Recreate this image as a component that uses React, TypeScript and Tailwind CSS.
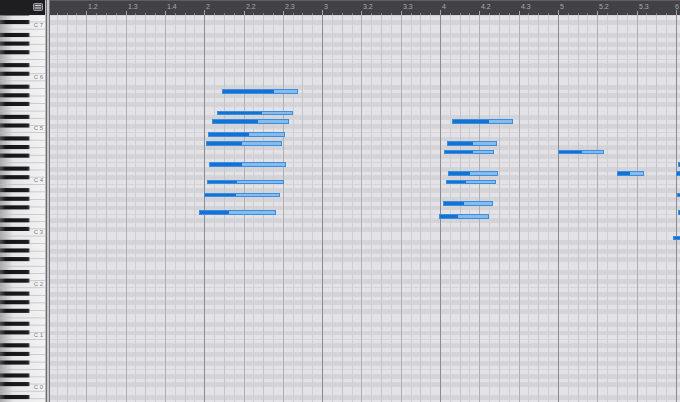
import React from 'react';

// piano roll geometry (px)
const ROW_H = 4.31;
const ROW_OFFSET = 5.2; // top of row 0 (C#7) inside the grid
const SIXTEENTH = 9.825;
const TIME_OFFSET = -3; // x of bar 1 inside grid/ruler
const GRID_LEFT = 50;
const GRID_H = 387;
const GRID_W = 630;

const rowTop = (i: number) => ROW_OFFSET + i * ROW_H;
const pitchClass = (i: number) => (((1 - i) % 12) + 12) % 12;
const isBlack = (i: number) => [1, 3, 6, 8, 10].includes(pitchClass(i));
const sx = (s: number) => TIME_OFFSET + s * SIXTEENTH;

const ROWS = Array.from({ length: 94 }, (_, k) => k - 2);
const STEPS = Array.from({ length: 66 }, (_, s) => s);
const BARS = [16, 28, 40, 52, 64];

const RULER_LABELS: [number, string][] = [
  [4, '1.2'], [8, '1.3'], [12, '1.4'],
  [16, '2'], [20, '2.2'], [24, '2.3'],
  [28, '3'], [32, '3.2'], [36, '3.3'],
  [40, '4'], [44, '4.2'], [48, '4.3'],
  [52, '5'], [56, '5.2'], [60, '5.3'],
  [64, '6'],
];

// [start x, end x, end of dark part, row] in page coords
const NOTES: [number, number, number, number][] = [
  [222, 298, 274, 16],
  [217, 293, 262, 21],
  [212, 289, 258, 23],
  [208, 285, 249, 26],
  [206, 282, 242, 28],
  [209, 286, 242, 33],
  [207, 284, 237, 37],
  [204, 280, 236, 40],
  [199, 276, 229, 44],
  [452, 513, 489, 23],
  [447, 497, 473, 28],
  [444, 494, 473, 30],
  [448, 498, 470, 35],
  [446, 496, 466, 37],
  [443, 493, 464, 42],
  [439, 489, 458, 45],
  [558, 604, 582, 30],
  [617, 644, 630, 35],
  [678, 720, 700, 33],
  [676, 720, 700, 35],
  [677, 720, 700, 40],
  [678, 720, 700, 44],
  [673, 720, 700, 50],
];

const OCTAVES = [7, 6, 5, 4, 3, 2, 1, 0];

function Separator() {
  return (
    <div className="flex w-[5px] shrink-0 h-full">
      <div className="w-[1px] bg-[#bdbdc0]" />
      <div className="w-[1px] bg-[#6c6c70]" />
      <div className="w-[2px] bg-[#c8c8cb]" />
      <div className="w-[1px] bg-[#7a7a7e]" />
    </div>
  );
}

function MenuIcon() {
  return (
    <svg width="10" height="8" viewBox="0 0 10 8">
      <rect x="0.5" y="0.5" width="9" height="7" rx="1" fill="#5a5a5e" stroke="#9c9ca0" />
      <rect x="2" y="2" width="6" height="1" fill="#d0d0d4" />
      <rect x="2" y="4.5" width="6" height="1" fill="#d0d0d4" />
    </svg>
  );
}

function Ruler() {
  return (
    <div className="relative flex-1 h-full bg-[#424246] border-t border-[#5e5e62] overflow-hidden">
      <svg className="absolute inset-0" width={GRID_W} height={15} shapeRendering="crispEdges">
        {STEPS.map(s => {
          const bar = BARS.includes(s);
          const beat = s % 4 === 0;
          const h = bar ? 5 : beat ? 4 : 2;
          return (
            <rect
              key={s}
              x={Math.round(sx(s))}
              y={14 - h}
              width={1}
              height={h}
              fill={bar || beat ? '#a4a4a8' : '#7e7e82'}
            />
          );
        })}
      </svg>
      {RULER_LABELS.map(([s, label]) => (
        <span
          key={label}
          className="absolute top-[1px] text-[7px] leading-[9px] text-[#a8a8ac]"
          style={{ left: Math.min(Math.round(sx(s)) + 2, GRID_W - 5) }}
        >
          {label}
        </span>
      ))}
    </div>
  );
}

function Keyboard() {
  const whiteLines: number[] = [];
  for (let oct = 0; oct < 9; oct++) {
    const cRow = 1 + oct * 12;
    const cBottom = rowTop(cRow) + ROW_H;
    const eTop = rowTop(cRow - 4);
    whiteLines.push(cBottom, cBottom - (5 * ROW_H) / 3, cBottom - (10 * ROW_H) / 3);
    whiteLines.push(eTop, eTop - (7 * ROW_H) / 4, eTop - (14 * ROW_H) / 4, eTop - (21 * ROW_H) / 4);
  }
  return (
    <div className="relative w-[45px] shrink-0 h-full overflow-hidden">
      <svg className="absolute inset-0" width={45} height={GRID_H}>
        <defs>
          <linearGradient id="wk" x1="0" x2="1" y1="0" y2="0">
            <stop offset="0" stopColor="#a9a9ab" />
            <stop offset="0.3" stopColor="#e6e6e8" />
            <stop offset="1" stopColor="#f3f3f4" />
          </linearGradient>
          <linearGradient id="bk" x1="0" x2="1" y1="0" y2="0">
            <stop offset="0" stopColor="#4a4a4c" />
            <stop offset="0.2" stopColor="#141416" />
            <stop offset="0.92" stopColor="#1c1c1e" />
            <stop offset="1" stopColor="#444446" />
          </linearGradient>
        </defs>
        <rect x="0" y="0" width="45" height={GRID_H} fill="url(#wk)" />
        {whiteLines.map((y, k) => (
          <rect key={k} x="0" y={y} width="45" height="0.7" fill="#bcbcbf" />
        ))}
        {ROWS.filter(isBlack).map(i => (
          <rect key={i} x="0" y={rowTop(i) - 0.2} width="29.5" height={ROW_H - 0.2} fill="url(#bk)" />
        ))}
      </svg>
      {OCTAVES.map((o, k) => (
        <span
          key={o}
          className="absolute right-[2px] text-[6px] leading-[6px] text-[#7c7c80]"
          style={{ top: rowTop(1 + k * 12) - 2.5 }}
        >
          C {o}
        </span>
      ))}
    </div>
  );
}

function lineColor(s: number) {
  if (BARS.includes(s)) return '#8c8c90';
  if (s % 4 === 0) return '#b0b0b4';
  if (s % 2 === 0) return '#c4c4c8';
  return '#d0d0d4';
}

function NoteGrid() {
  return (
    <div className="relative flex-1 h-full overflow-hidden bg-[#e2e2e6]">
      <svg className="absolute inset-0" width={GRID_W} height={GRID_H} shapeRendering="crispEdges">
        {ROWS.map(i => (
          <rect
            key={i}
            x="0"
            y={rowTop(i)}
            width={GRID_W}
            height={ROW_H}
            fill={isBlack(i) ? '#d4d4d8' : '#e3e3e7'}
          />
        ))}
        {ROWS.map(i => (
          <rect key={`l${i}`} x="0" y={rowTop(i)} width={GRID_W} height="0.6" fill="#d6d6da" />
        ))}
        {STEPS.map(s => (
          <rect key={s} x={Math.round(sx(s))} y="0" width="1" height={GRID_H} fill={lineColor(s)} />
        ))}
      </svg>
      {NOTES.map(([x0, x1, xd, row], k) => (
        <div
          key={k}
          className="absolute flex box-border border border-[#3a8de0] bg-[#86bcec]"
          style={{
            left: x0 - GRID_LEFT,
            width: x1 - x0,
            top: rowTop(row),
            height: ROW_H + 0.4,
          }}
        >
          <div className="h-full bg-[#1273d2]" style={{ width: xd - x0 - 1 }} />
        </div>
      ))}
    </div>
  );
}

export default function App() {
  return (
    <div className="w-[680px] h-[402px] flex flex-col overflow-hidden bg-[#1c1c1e] font-['Liberation_Sans',sans-serif]">
      <div className="flex h-[15px] shrink-0">
        <div className="w-[45px] shrink-0 h-full bg-[#1e1e20] flex items-start justify-end pt-[3px] pr-[2px]">
          <MenuIcon />
        </div>
        <Separator />
        <Ruler />
      </div>
      <div className="flex flex-1 min-h-0">
        <Keyboard />
        <Separator />
        <NoteGrid />
      </div>
    </div>
  );
}
